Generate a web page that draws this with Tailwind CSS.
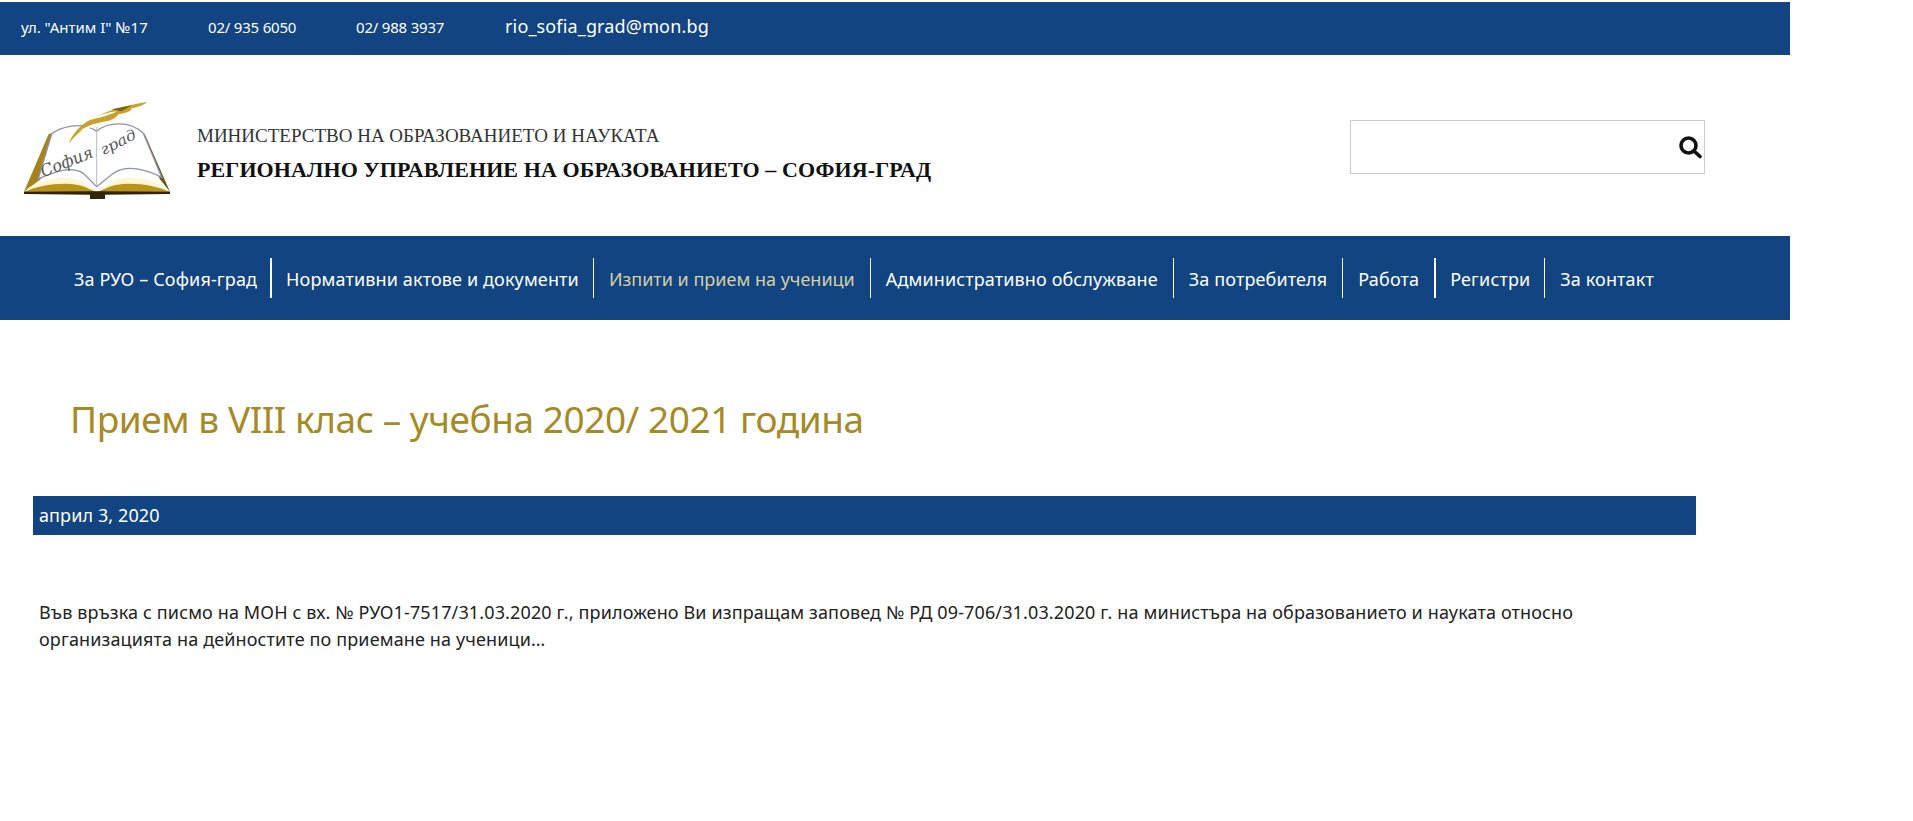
<!DOCTYPE html>
<html lang="bg">
<head>
    <meta charset="UTF-8">
    <meta name="viewport" content="width=device-width, initial-scale=1.0">
    <title>Прием в VIII клас</title>
    <script src="https://cdn.jsdelivr.net/npm/@tailwindcss/browser@4"></script>
</head>
<body class="bg-white font-['Noto_Sans',sans-serif] text-[#222] h-[821px] overflow-hidden">
    <!-- top bar -->
    <div class="mt-[2px] w-[1790px] h-[53px] bg-[#114481] text-white flex items-center pl-[21px] pb-[3px] text-[15px]">
        <span class="w-[187px]">ул. "Антим I" №17</span>
        <span class="w-[148px] tracking-[-0.2px]">02/ 935 6050</span>
        <span class="w-[149px] tracking-[-0.2px]">02/ 988 3937</span>
        <span class="text-[18px] -mt-[1px] tracking-[0.15px]">rio_sofia_grad@mon.bg</span>
    </div>

    <!-- header -->
    <div class="w-[1790px] h-[181px] flex items-center">
        <svg class="ml-[10px] mt-[9px] w-[180px] h-[120px]" viewBox="0 0 540 360">
            <!-- book covers -->
            <path d="M42 305 L116 132 L138 126 L92 268 Z" fill="#a5831a"/>
            <path d="M480 305 L404 132 L384 126 L450 268 Z" fill="#6b5410"/>
            <!-- pages -->
            <path d="M125 132 C150 112 215 92 260 124 C290 96 360 90 400 130 L455 262 C410 238 350 222 310 250 L260 290 L220 250 C180 224 125 250 85 266 Z" fill="#fff" stroke="#8f93a8" stroke-width="4"/>
            <path d="M260 110 L260 288" stroke="#b9bcc8" stroke-width="3"/>
            <!-- lower gold band -->
            <path d="M50 298 C95 262 190 246 236 288 L260 298 L286 288 C332 246 428 262 472 298 Z" fill="#fff6d6"/>
            <path d="M42 305 C95 282 190 268 240 298 L260 306 L282 298 C332 268 428 282 480 305 L480 311 L42 311 Z" fill="#b8941c"/>
            <path d="M42 305 L240 304 L282 304 L480 305 L480 312 L285 314 L285 327 L240 327 L240 314 L42 312 Z" fill="#2f2508"/>
            <!-- quill -->
            <path d="M176 162 C196 104 262 60 412 36 C396 48 382 52 362 56 C370 60 348 70 326 72 C316 90 282 98 252 102 C222 112 196 134 176 162 Z" fill="#c9a22a"/>
            <path d="M232 92 C258 76 290 68 322 64 C296 76 268 84 232 92 Z" fill="#fff"/>
            <path d="M210 122 C232 106 262 98 296 92 C268 106 240 112 210 122 Z" fill="#fff"/>
            <path d="M304 58 L366 46 L334 64 Z" fill="#7b6214"/>
            <!-- handwriting -->
            <text x="100" y="262" transform="rotate(-22 100 262)" textLength="165" lengthAdjust="spacingAndGlyphs" font-family="'DejaVu Serif',serif" font-style="italic" font-size="50" fill="#555">София</text>
            <text x="280" y="196" transform="rotate(-27 280 196)" textLength="115" lengthAdjust="spacingAndGlyphs" font-family="'DejaVu Serif',serif" font-style="italic" font-size="44" fill="#555">град</text>
        </svg>
        <div class="ml-[7px] mt-[15px] font-['Liberation_Serif',serif] leading-none">
            <div class="text-[19px] text-[#333]">МИНИСТЕРСТВО НА ОБРАЗОВАНИЕТО И НАУКАТА</div>
            <div class="mt-[14px] text-[22px] font-bold text-[#111] tracking-[0.1px]">РЕГИОНАЛНО УПРАВЛЕНИЕ НА ОБРАЗОВАНИЕТО – СОФИЯ-ГРАД</div>
        </div>
        <div class="ml-auto mr-[85px] mt-[2px] w-[355px] h-[54px] border border-[#ccc] flex items-center justify-end pr-[2px]">
            <svg class="w-[24px] h-[24px]" viewBox="0 0 24 24" fill="none" stroke="#111" stroke-width="3.6" stroke-linecap="round">
                <circle cx="10.5" cy="10.5" r="7.5"/>
                <path d="M16 16 L22 21.5"/>
            </svg>
        </div>
    </div>

    <!-- nav -->
    <nav class="w-[1790px] h-[84px] bg-[#114481] flex items-center pl-[59px] text-white text-[18px] tracking-[0.13px]">
        <a class="pl-[15px] pr-[13px] h-[40px] leading-[42px] border-r-2 border-white">За РУО – София-град</a>
        <a class="px-[14px] h-[40px] leading-[42px] border-r border-white">Нормативни актове и документи</a>
        <a class="px-[15px] h-[40px] leading-[42px] border-r border-white text-[#d6cfa5] tracking-[0px]">Изпити и прием на ученици</a>
        <a class="px-[15px] h-[40px] leading-[42px] border-r border-white">Административно обслужване</a>
        <a class="px-[15px] h-[40px] leading-[42px] border-r border-white">За потребителя</a>
        <a class="px-[15px] h-[40px] leading-[42px] border-r-2 border-white">Работа</a>
        <a class="px-[14px] h-[40px] leading-[42px] border-r border-white">Регистри</a>
        <a class="px-[15px] h-[40px] leading-[42px]">За контакт</a>
    </nav>

    <!-- article -->
    <h1 class="ml-[70px] mt-[74px] text-[37px] leading-[50px] tracking-[-0.45px] text-[#a68a24]">Прием в VIII клас – учебна 2020/ 2021 година</h1>
    <div class="ml-[33px] mt-[52px] w-[1663px] h-[39px] bg-[#114481] text-white text-[18px] leading-[38px] pl-[6px] tracking-[0.1px]">април 3, 2020</div>
    <p class="ml-[39px] mt-[64px] w-[1560px] text-[18px] leading-[27px] tracking-[0.13px] text-[#222]">Във връзка с писмо на МОН с вх. № РУО1-7517/31.03.2020 г., приложено Ви изпращам заповед № РД 09-706/31.03.2020 г. на министъра на образованието и науката относно организацията на дейностите по приемане на ученици…</p>
</body>
</html>
